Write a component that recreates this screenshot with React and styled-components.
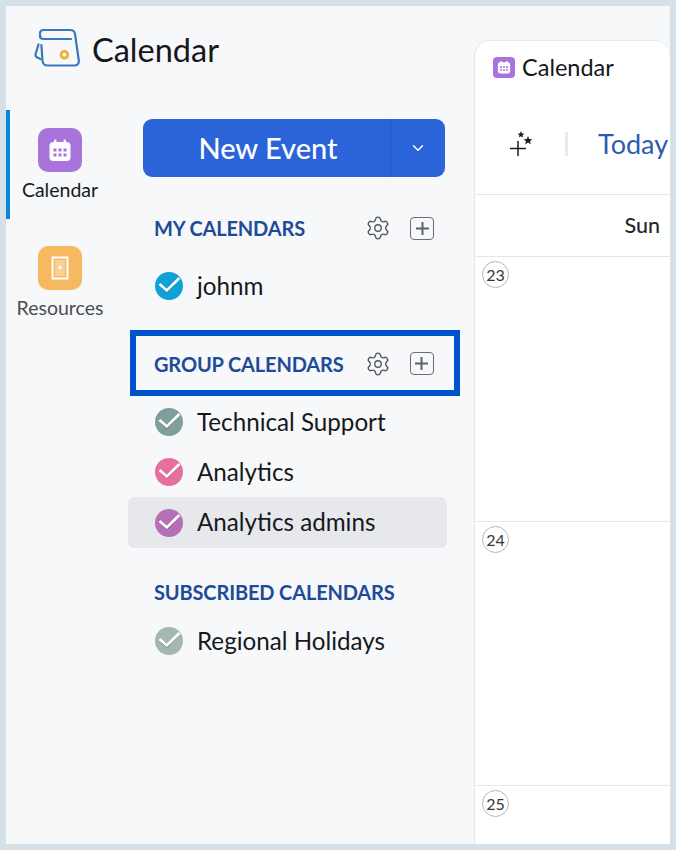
import React from "react";
import styled, { createGlobalStyle } from "styled-components";
import { Settings, ChevronDown } from "lucide-react";

const Global = createGlobalStyle`
  html, body { margin: 0; padding: 0; }
  body { font-family: Lato, "Noto Sans", sans-serif; color: #16181c; }
  * { box-sizing: border-box; }
`;

const Frame = styled.div`
  width: 676px;
  height: 850px;
  padding: 6px;
  background: #d6e0e7;
  overflow: hidden;
`;

const Shell = styled.div`
  display: flex;
  height: 838px;
  background: #f6f8fa;
  overflow: hidden;
`;

const Sidebar = styled.aside`
  width: 468px;
  flex: none;
  display: flex;
  flex-direction: column;
`;

const Brand = styled.header`
  height: 104px;
  flex: none;
  display: flex;
  align-items: flex-start;
  gap: 8px;
  padding: 18px 0 0 24px;
`;

const BrandTitle = styled.h1`
  margin: 7px 0 0;
  font-size: 32.5px;
  line-height: 38px;
  font-weight: 400;
  color: #15171b;
`;

const SideBody = styled.div`
  display: flex;
  flex: 1;
`;

const Rail = styled.nav`
  width: 122px;
  flex: none;
  display: flex;
  flex-direction: column;
  gap: 9px;
`;

const RailItem = styled.div`
  width: 108px;
  height: 109px;
  padding: 18px 4px 0 0;
  border-left: 4px solid ${(p) => (p.$active ? "#0a86d8" : "transparent")};
  display: flex;
  flex-direction: column;
  align-items: center;
`;

const RailIcon = styled.div`
  width: 44px;
  height: 44px;
  border-radius: 10px;
  background: ${(p) => p.$color};
  display: flex;
  align-items: center;
  justify-content: center;
`;

const RailLabel = styled.span`
  margin-top: 6px;
  font-size: 19.5px;
  line-height: 24px;
  white-space: nowrap;
  color: ${(p) => (p.$active ? "#16181c" : "#4b4d52")};
`;

const Lists = styled.div`
  flex: 1;
  padding-top: 9px;
  display: flex;
  flex-direction: column;
`;

const SplitButton = styled.div`
  width: 302px;
  height: 58px;
  margin-left: 15px;
  flex: none;
  display: flex;
  border-radius: 9px;
  background: #2b63d9;
  color: #fff;
`;

const MainAction = styled.div`
  width: 248px;
  border-right: 1px solid #2557c0;
  display: flex;
  align-items: center;
  justify-content: center;
  font-size: 29px;
  font-weight: 500;
  padding: 0 0 2px 3px;
`;

const CaretAction = styled.div`
  flex: 1;
  display: flex;
  align-items: center;
  justify-content: center;
`;

const SectionHead = styled.div`
  height: 30px;
  margin-top: ${(p) => p.$top}px;
  padding-left: 26px;
  display: flex;
  align-items: center;
`;

const BoxedHead = styled.div`
  width: 330px;
  height: 66px;
  margin: 19px 0 1px 2px;
  padding: 1px 0 0 18px;
  border: 6px solid #0052cc;
  display: flex;
  align-items: center;
`;

const SectionTitle = styled.h2`
  margin: 0;
  font-size: 20px;
  line-height: 24px;
  font-weight: 700;
  letter-spacing: -0.15px;
  color: #1f4a97;
  white-space: nowrap;
`;

const HeadTools = styled.div`
  margin-left: ${(p) => p.$left}px;
  display: flex;
  align-items: center;
  gap: 19px;
  color: #55585e;
`;

const AddBox = styled.div`
  width: 24px;
  height: 23px;
  border: 1.5px solid #6a6d72;
  border-radius: 4px;
  display: flex;
  align-items: center;
  justify-content: center;
`;

const CalendarRow = styled.div`
  width: 319px;
  height: ${(p) => p.$h || 50}px;
  margin-top: ${(p) => p.$top || 0}px;
  padding-left: 27px;
  display: flex;
  align-items: center;
  gap: 14px;
  border-radius: 6px;
  background: ${(p) => (p.$selected ? "#e6e8eb" : "transparent")};
`;

const RowLabel = styled.span`
  margin-bottom: 2px;
  font-size: 24.2px;
  color: #16181c;
`;

const Main = styled.main`
  flex: 1;
  margin-top: 34px;
  background: #fff;
  border-left: 1px solid #e3e6ea;
  border-top: 1px solid #e6e9ed;
  border-radius: 16px 16px 0 0;
  display: flex;
  flex-direction: column;
  overflow: hidden;
`;

const Tab = styled.div`
  height: 52px;
  flex: none;
  padding-left: 18px;
  display: flex;
  align-items: center;
  gap: 7px;
  font-size: 23.5px;
  color: #15171b;
`;

const TabIcon = styled.div`
  width: 22px;
  height: 21px;
  border-radius: 4px;
  background: #a973dc;
  display: flex;
  align-items: center;
  justify-content: center;
`;

const Toolbar = styled.div`
  height: 102px;
  flex: none;
  padding-left: 34px;
  display: flex;
  align-items: center;
  border-bottom: 1px solid #e3e6ea;
  white-space: nowrap;
`;

const ToolDivider = styled.div`
  width: 3px;
  height: 24px;
  margin: 0 30px 0 32px;
  background: #e8eaed;
`;

const TodayLink = styled.span`
  font-size: 27px;
  color: #2a5db0;
`;

const DayHead = styled.div`
  height: 62px;
  flex: none;
  padding: 0 10px 2px 0;
  display: flex;
  align-items: center;
  justify-content: flex-end;
  border-bottom: 1px solid #e3e6ea;
  font-size: 21.5px;
  font-weight: 500;
  color: #26282c;
`;

const WeekRow = styled.div`
  height: 264.5px;
  flex: none;
  padding: 4px 0 0 7px;
  border-bottom: 1px solid #e3e6ea;
`;

const DateBadge = styled.span`
  width: 27px;
  height: 27px;
  border: 1px solid #b4b6b9;
  border-radius: 50%;
  display: flex;
  align-items: center;
  justify-content: center;
  font-size: 16px;
  color: #35373b;
`;

const Logo = () => (
  <svg width="54" height="48" viewBox="0 0 54 48" fill="none" style={{ flex: "none" }}>
    <g stroke="#3a78b8" strokeWidth="2.2" strokeLinecap="round" strokeLinejoin="round">
      <path d="M10 13 V9.5 Q10 6 13.5 6 H40 Q44.5 6 45 10 L48.8 36.5 Q49.2 41.5 44 41.5 H17.5 Q13 41.5 12.5 37 L11.4 21" />
      <path d="M10 12 Q10 15 13.5 15 H41" />
      <path d="M8.5 20.5 L5.6 30 Q5 32 7 33.2 L10.4 35" />
    </g>
    <circle cx="34.4" cy="30.8" r="3.4" stroke="#efb02f" strokeWidth="2.8" />
    <path d="M31.5 26.5 L34.5 26 L33 28.5 Z" fill="#efb02f" />
  </svg>
);

const CalendarGlyph = ({ size, fill, dot }) => (
  <svg width={size} height={size} viewBox="0 0 24 24">
    <rect x="6" y="1.5" width="2.5" height="5" rx="1.2" fill={fill} />
    <rect x="15.5" y="1.5" width="2.5" height="5" rx="1.2" fill={fill} />
    <rect x="1.5" y="4" width="21" height="19" rx="4" fill={fill} />
    {[7, 12, 17].map((x) =>
      [12, 17].map((y) => <rect key={`${x}-${y}`} x={x - 1.5} y={y - 1.5} width="3" height="3" fill={dot} />)
    )}
  </svg>
);

const RoomGlyph = () => (
  <svg width="18" height="24" viewBox="0 0 18 24" fill="none">
    <rect x="1.5" y="1.5" width="15" height="21" stroke="#fff" strokeWidth="2" />
    <rect x="4" y="4" width="10" height="16" fill="#f9cf93" />
    <rect x="7.5" y="10" width="3" height="3" fill="#fff" />
  </svg>
);

const Check = ({ color }) => (
  <svg width="28" height="28" viewBox="0 0 28 28" style={{ flex: "none" }}>
    <circle cx="14" cy="14" r="14" fill={color} />
    <path d="M4 13.6 L12 20.8 L24 8.6 L12 19.2 Z" fill="#2b2f36" fillOpacity="0.8" />
    <path d="M4.5 12 L11.8 18.4 L24.4 6" fill="none" stroke="#fff" strokeWidth="2.6" />
  </svg>
);

const Plus = () => (
  <svg width="15" height="15" viewBox="0 0 15 15">
    <path d="M7.5 1 V14 M1 7.5 H14" stroke="#5f6267" strokeWidth="2" />
  </svg>
);

const Sparkle = () => (
  <svg width="24" height="25" viewBox="0 0 24 25">
    <path d="M9 10 V25 M1 17.5 H17" stroke="#1b1d20" strokeWidth="1.5" />
    <path d="M12 0 L13 2.4 L15.4 2.6 L13.6 4.2 L14.1 6.6 L12 5.3 L9.9 6.6 L10.4 4.2 L8.6 2.6 L11 2.4 Z" fill="#1b1d20" />
    <path d="M19 5 L20.2 8 L23.4 8.2 L21 10.2 L21.8 13.4 L19 11.6 L16.2 13.4 L17 10.2 L14.6 8.2 L17.8 8 Z" fill="#1b1d20" />
  </svg>
);

const Tools = ({ left }) => (
  <HeadTools $left={left}>
    <Settings size={26} strokeWidth={1.25} />
    <AddBox>
      <Plus />
    </AddBox>
  </HeadTools>
);

const Row = ({ color, label, ...rest }) => (
  <CalendarRow {...rest}>
    <Check color={color} />
    <RowLabel>{label}</RowLabel>
  </CalendarRow>
);

export default function App() {
  return (
    <>
      <Global />
      <Frame>
        <Shell>
          <Sidebar>
            <Brand>
              <Logo />
              <BrandTitle>Calendar</BrandTitle>
            </Brand>
            <SideBody>
              <Rail>
                <RailItem $active>
                  <RailIcon $color="#a973dc">
                    <CalendarGlyph size={24} fill="#fff" dot="#a973dc" />
                  </RailIcon>
                  <RailLabel $active>Calendar</RailLabel>
                </RailItem>
                <RailItem>
                  <RailIcon $color="#f6b860">
                    <RoomGlyph />
                  </RailIcon>
                  <RailLabel>Resources</RailLabel>
                </RailItem>
              </Rail>
              <Lists>
                <SplitButton>
                  <MainAction>New Event</MainAction>
                  <CaretAction>
                    <ChevronDown size={18} strokeWidth={2} />
                  </CaretAction>
                </SplitButton>

                <SectionHead $top={36}>
                  <SectionTitle>MY CALENDARS</SectionTitle>
                  <Tools left={60} />
                </SectionHead>
                <Row $top={18} color="#0ea2d8" label="johnm" />

                <BoxedHead>
                  <SectionTitle>GROUP CALENDARS</SectionTitle>
                  <Tools left={21} />
                </BoxedHead>
                <Row color="#7f9f9c" label="Technical Support" />
                <Row color="#e76f9c" label="Analytics" />
                <Row $selected $h={51} color="#b56fb4" label="Analytics admins" />

                <SectionHead $top={29}>
                  <SectionTitle>SUBSCRIBED CALENDARS</SectionTitle>
                </SectionHead>
                <Row $top={9} color="#a3b8b3" label="Regional Holidays" />
              </Lists>
            </SideBody>
          </Sidebar>

          <Main>
            <Tab>
              <TabIcon>
                <CalendarGlyph size={14} fill="#fff" dot="#a973dc" />
              </TabIcon>
              Calendar
            </Tab>
            <Toolbar>
              <Sparkle />
              <ToolDivider />
              <TodayLink>Today</TodayLink>
            </Toolbar>
            <DayHead>Sun</DayHead>
            <WeekRow>
              <DateBadge>23</DateBadge>
            </WeekRow>
            <WeekRow>
              <DateBadge>24</DateBadge>
            </WeekRow>
            <WeekRow>
              <DateBadge>25</DateBadge>
            </WeekRow>
          </Main>
        </Shell>
      </Frame>
    </>
  );
}
